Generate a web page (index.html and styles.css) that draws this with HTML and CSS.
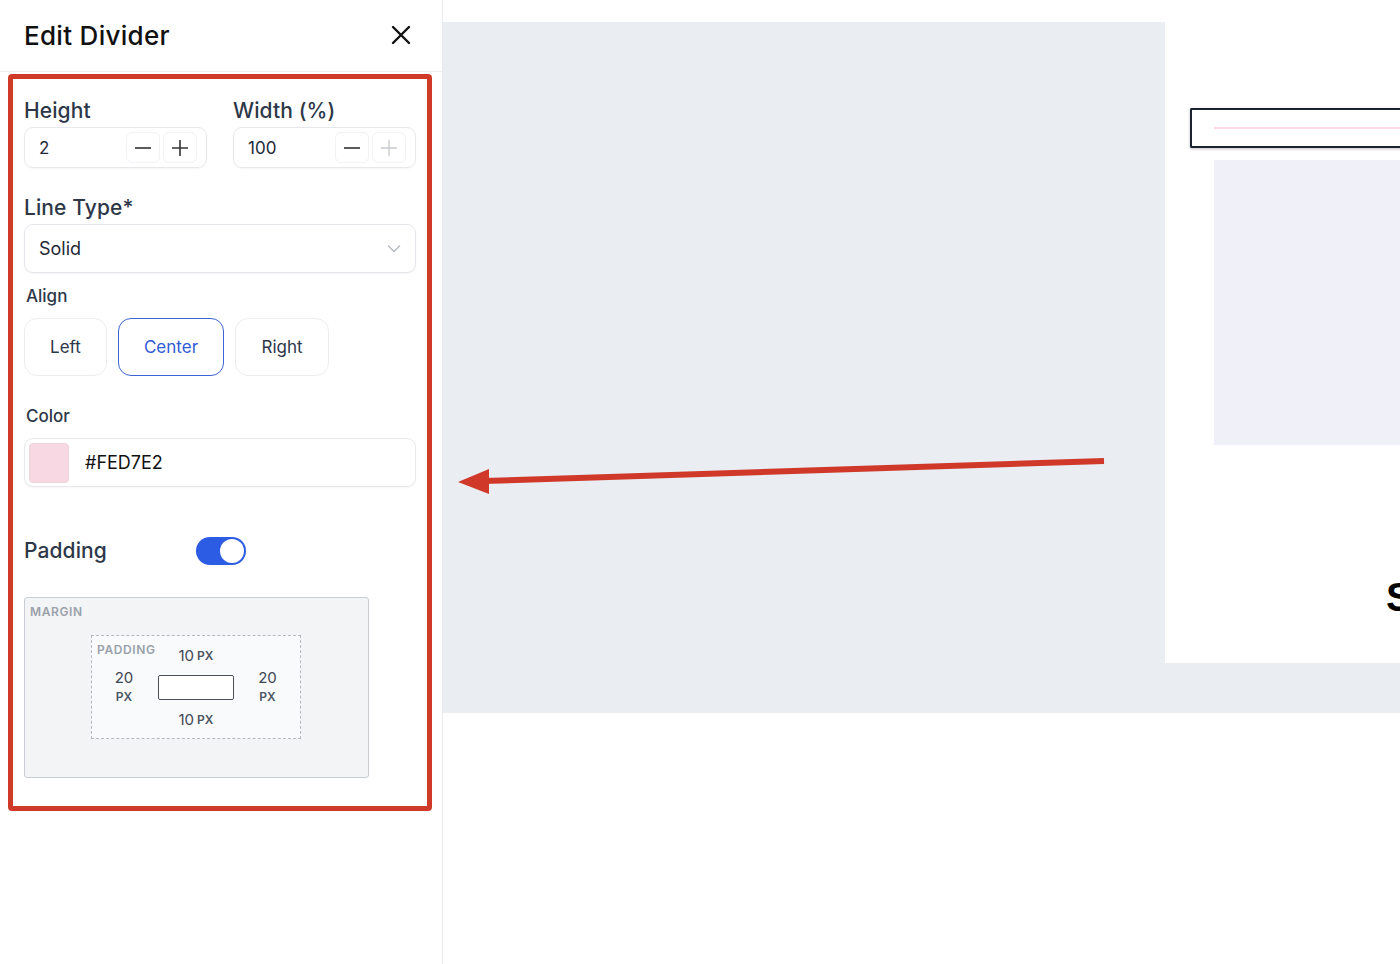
FILE: index.html
```html
<!DOCTYPE html>
<html>
<head>
<meta charset="utf-8">
<link rel="stylesheet" href="styles.css">
</head>
<body>
<div class="page">
  <aside class="sidebar">
    <div class="header">
      <h1 class="title">Edit Divider</h1>
      <svg class="close" width="20" height="20" viewBox="0 0 20 20"><path d="M2 2 L18 18 M18 2 L2 18" stroke="#111" stroke-width="2.4" stroke-linecap="round"/></svg>
    </div>
    <div class="frame">
      <div class="row2">
        <div class="field">
          <div class="label-lg">Height</div>
          <div class="num-input">
            <span class="num-val">2</span>
            <div class="steps">
              <span class="step"><svg width="18" height="18" viewBox="0 0 18 18"><path d="M1 9 H17" stroke="#333" stroke-width="1.6"/></svg></span>
              <span class="step"><svg width="18" height="18" viewBox="0 0 18 18"><path d="M1 9 H17 M9 1 V17" stroke="#333" stroke-width="1.6"/></svg></span>
            </div>
          </div>
        </div>
        <div class="field">
          <div class="label-lg">Width (%)</div>
          <div class="num-input">
            <span class="num-val">100</span>
            <div class="steps">
              <span class="step"><svg width="18" height="18" viewBox="0 0 18 18"><path d="M1 9 H17" stroke="#333" stroke-width="1.6"/></svg></span>
              <span class="step"><svg width="18" height="18" viewBox="0 0 18 18"><path d="M1 9 H17 M9 1 V17" stroke="#c9ccd1" stroke-width="1.4"/></svg></span>
            </div>
          </div>
        </div>
      </div>

      <div class="label-lg mt-line">Line Type*</div>
      <div class="select">
        <span>Solid</span>
        <svg width="14" height="9" viewBox="0 0 14 9"><path d="M1 1.5 L7 7.5 L13 1.5" fill="none" stroke="#b3b8bf" stroke-width="1.3"/></svg>
      </div>

      <div class="label-sm mt-align">Align</div>
      <div class="align-row">
        <span class="abtn w-left">Left</span>
        <span class="abtn w-center active">Center</span>
        <span class="abtn w-right">Right</span>
      </div>

      <div class="label-sm mt-color">Color</div>
      <div class="color-input">
        <span class="swatch"></span>
        <span class="hex">#FED7E2</span>
      </div>

      <div class="pad-row">
        <span class="label-lg pad-label">Padding</span>
        <span class="toggle"><span class="knob"></span></span>
      </div>

      <div class="margin-box">
        <div class="box-label">MARGIN</div>
        <div class="padding-box">
          <div class="box-label pad-tag">PADDING</div>
          <div class="cell top"><span class="n">10</span> <span class="u">PX</span></div>
          <div class="cell left"><span class="n">20</span><span class="u">PX</span></div>
          <div class="cell mid"><span class="content"></span></div>
          <div class="cell right"><span class="n">20</span><span class="u">PX</span></div>
          <div class="cell bottom"><span class="n">10</span> <span class="u">PX</span></div>
        </div>
      </div>
    </div>
  </aside>

  <main class="main">
    <div class="canvas">
      <div class="card">
        <div class="divider-sel"><span class="pink-line"></span></div>
        <div class="lavender"></div>
        <div class="big-s">S</div>
      </div>
    </div>
  </main>

  <svg class="arrow" width="1400" height="964" viewBox="0 0 1400 964">
    <path d="M1104 461 L484 481" stroke="#d0392a" stroke-width="6" fill="none"/>
    <path d="M458 482 L489 469 L489 494 Z" fill="#d0392a"/>
  </svg>
</div>
</body>
</html>
```
FILE: styles.css
```css
* { box-sizing: border-box; }
html, body { margin: 0; padding: 0; background: #fff; }
body { font-family: Inter, "Open Sans", "Liberation Sans", sans-serif; color: #1f2937; }

.page { position: relative; display: flex; width: 1400px; height: 964px; overflow: hidden; }

.sidebar { width: 443px; flex: none; border-right: 1px solid #e8eaed; height: 964px; }

.header { height: 72px; display: flex; align-items: center; justify-content: space-between; padding: 0 31px 0 24px; border-bottom: 1px solid #eef0f2; }
.title { margin: 0; font-size: 26px; font-weight: 500; color: #111; letter-spacing: 0.3px; }
.close { display: block; margin-top: -2px; }

.frame { margin: 2px 0 0 8px; width: 424px; height: 737px; border: 5px solid #cf3a29; border-radius: 4px; padding: 19px 11px 0 11px; }

.row2 { display: grid; grid-template-columns: 183px 183px; column-gap: 26px; }
.label-lg { font-size: 21px; font-weight: 500; line-height: 26px; color: #2d3748; letter-spacing: 0.1px; }
.label-sm { font-size: 17px; font-weight: 500; line-height: 22px; color: #2d3748; padding-left: 2px; }
.field .label-lg { margin-bottom: 3px; }

.num-input { height: 41px; border: 1px solid #e6e8eb; border-radius: 9px; display: flex; align-items: center; justify-content: space-between; padding: 0 9px 0 14px; box-shadow: 0 1px 2px rgba(0,0,0,0.04); }
.num-val { font-size: 17px; color: #1f2937; }
.steps { display: flex; gap: 3px; }
.step { width: 34px; height: 31px; border: 1px solid #f1f2f4; border-radius: 6px; display: flex; align-items: center; justify-content: center; }

.mt-line { margin-top: 27px; margin-bottom: 3px; }
.select { height: 49px; border: 1px solid #e3e6ea; border-radius: 9px; display: flex; align-items: center; justify-content: space-between; padding: 0 14px 0 14px; font-size: 18px; color: #1f2937; box-shadow: 0 1px 2px rgba(0,0,0,0.05); }

.mt-align { margin-top: 12px; }
.align-row { display: flex; gap: 11px; margin-top: 11px; }
.abtn { height: 58px; border: 1px solid #ebedf0; border-radius: 13px; display: flex; align-items: center; justify-content: center; font-size: 17px; color: #2d3748; }
.w-left { width: 83px; }
.w-center { width: 106px; }
.w-right { width: 94px; }
.abtn.active { border-color: #3d63d4; color: #2f5bd6; }

.mt-color { margin-top: 29px; }
.color-input { margin-top: 11px; height: 49px; border: 1px solid #e6e8eb; border-radius: 9px; display: flex; align-items: center; padding: 0 4px; box-shadow: 0 1px 2px rgba(0,0,0,0.04); }
.swatch { width: 40px; height: 40px; border-radius: 4px; background: #f8d8e2; border: 1px solid #eed3db; }
.hex { margin-left: 16px; font-size: 18px; color: #111; }

.pad-row { display: flex; align-items: center; margin-top: 50px; height: 28px; }
.pad-label { width: 172px; }
.toggle { width: 50px; height: 28px; border-radius: 14px; background: #2c5ce3; display: flex; align-items: center; justify-content: flex-end; padding: 2px; }
.knob { width: 24px; height: 24px; border-radius: 50%; background: #fff; }

.margin-box { margin-top: 32px; width: 345px; height: 181px; background: #f3f4f6; border: 1px solid #c9cdd3; border-radius: 3px; padding: 7px 5px; }
.box-label { font-size: 12px; font-weight: 600; letter-spacing: 0.6px; color: #9aa1ab; line-height: 14px; }
.padding-box { position: relative; margin: 16px 0 0 61px; width: 210px; height: 104px; border: 1px dashed #b5b9bf; background: #f9fafb; display: grid; grid-template-columns: 1fr 76px 1fr; grid-template-rows: 18px 44px 18px; row-gap: 1px; padding-top: 10px; }
.pad-tag { position: absolute; top: 7px; left: 5px; }
.cell { display: flex; align-items: center; justify-content: center; color: #3f4652; }
.cell .n { font-size: 15px; }
.cell .u { font-size: 12px; font-weight: 600; color: #4b5563; margin-left: 3px; }
.top, .bottom { grid-column: 2; }
.top { grid-row: 1; }
.bottom { grid-row: 3; }
.left, .right { flex-direction: column; grid-row: 2; line-height: 20px; }
.left .u, .right .u { margin-left: 0; line-height: 18px; }
.left { grid-column: 1; padding-right: 2px; }
.right { grid-column: 3; padding-left: 1px; }
.mid { grid-column: 2; grid-row: 2; }
.content { width: 76px; height: 25px; background: #fff; border: 1px solid #4b5058; border-radius: 2px; }

.main { flex: 1; overflow: hidden; background: #fff; }
.canvas { margin-top: 22px; height: 691px; background: #eaeef2; padding-left: 722px; }
.card { width: 400px; height: 641px; background: #fff; padding-top: 86px; padding-left: 25px; }
.divider-sel { height: 40px; border: 2.5px solid #1c2230; border-right: none; border-radius: 2px 0 0 2px; box-shadow: 0 1px 3px rgba(0,0,0,0.25); display: flex; align-items: center; padding-left: 22px; }
.pink-line { display: block; flex: 1; height: 2px; background: #FED7E2; margin-top: -1px; }
.lavender { margin: 12px 0 0 24px; height: 285px; background: #eff0f8; }
.big-s { margin: 132px 0 0 196px; font-family: "Liberation Sans", Arial, sans-serif; font-size: 40px; font-weight: 700; color: #000; line-height: 40px; }

.arrow { position: absolute; left: 0; top: 0; pointer-events: none; }
```
